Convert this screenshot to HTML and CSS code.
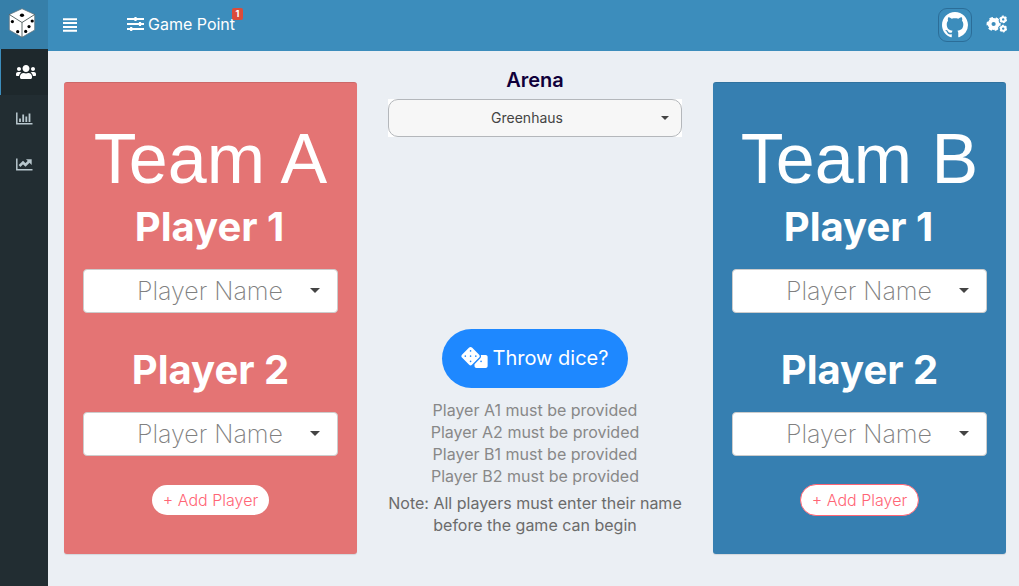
FILE: index.html
```html
<!DOCTYPE html>
<html lang="en">
<head>
<meta charset="utf-8">
<title>Game Point</title>
<link rel="stylesheet" href="styles.css">
</head>
<body>
<div class="app">
  <aside class="sidebar">
    <div class="logo">
      <svg width="28" height="30" viewBox="0 0 28 30"><path d="M14 .7 26.7 6.5V22L14 29.3 1.3 22V6.5Z" fill="#fff" stroke="#667883" stroke-width=".8"/><path d="M1.3 6.5 14 14.5 26.7 6.5M14 14.5v14.8" fill="none" stroke="#344" stroke-width=".8"/><g><ellipse cx="14" cy="7.3" rx="2.1" ry="1.7"/><circle cx="4.4" cy="13.6" r="1.6"/><circle cx="9.7" cy="23.7" r="1.6"/><circle cx="24.2" cy="13" r="1.6"/><circle cx="21" cy="18.6" r="1.6"/><circle cx="17.7" cy="23.4" r="1.6"/></g></svg>
    </div>
    <nav>
      <a class="item active"><svg width="20" height="16" viewBox="0 0 640 512" fill="currentColor"><path d="M96 224c35.300 0 64-28.700 64-64s-28.700-64-64-64-64 28.700-64 64 28.700 64 64 64zm448 0c35.300 0 64-28.700 64-64s-28.700-64-64-64-64 28.700-64 64 28.700 64 64 64zm32 32h-64c-17.600 0-33.500 7.100-45.100 18.600 40.300 22.100 68.900 62 75.100 109.400h66c17.700 0 32-14.300 32-32v-32c0-35.300-28.700-64-64-64zm-256 0c61.900 0 112-50.100 112-112S381.900 32 320 32 208 82.100 208 144s50.100 112 112 112zm76.800 32h-8.300c-20.800 10-43.900 16-68.500 16s-47.600-6-68.500-16h-8.300C179.600 288 128 339.600 128 403.200V432c0 26.500 21.500 48 48 48h288c26.500 0 48-21.500 48-48v-28.800c0-63.600-51.600-115.200-115.200-115.200zm-223.700-13.400C161.500 263.100 145.600 256 128 256H64c-35.300 0-64 28.700-64 64v32c0 17.700 14.300 32 32 32h65.900c6.300-47.400 34.900-87.300 75.200-109.400z"/></svg></a>
      <a class="item"><svg width="17" height="13" viewBox="0 0 17 13" fill="none" stroke="currentColor"><path d="M.8 .5v11.200H16.500" stroke-width="1.500"/><path d="M4 10V6.500M7.200 10V2.500M10.300 10V4.500M13.500 10V1.500" stroke-width="1.800"/></svg></a>
      <a class="item"><svg width="17" height="13" viewBox="0 0 17 13" fill="none" stroke="currentColor"><path d="M.8 .5v11.200H16.500" stroke-width="1.500"/><path d="M3.500 8 7 4.500 9.500 7 13.500 3" stroke-width="2.500"/><path d="M10 1.200h5.700v5.700Z" fill="currentColor" stroke="none"/></svg></a>
    </nav>
  </aside>
  <div class="main">
    <header class="topbar">
      <svg class="burger" width="14" height="14" viewBox="0 0 14 14" fill="#fff"><path d="M0 .2h14v2H0zM0 4.100h14v2H0zM0 8h14v2H0zM0 11.800h14v2H0z"/></svg>
      <a class="gamepoint"><svg width="17" height="14" viewBox="0 0 17 14" fill="none" stroke="#fff"><path d="M0 2h17M0 7h17M0 12h17" stroke-width="1.800"/><path d="M8.500 0v4M13 5v4M4.200 10v4" stroke-width="2.200"/></svg><span>Game Point</span><b class="badge">1</b></a>
      <span class="github"><svg width="26" height="26" viewBox="0 0 16 16" fill="#fff"><path d="M8 0C3.580 0 0 3.580 0 8c0 3.540 2.290 6.530 5.470 7.590.4.070.55-.17.55-.38 0-.19-.01-.82-.01-1.490-2.010.37-2.530-.49-2.690-.94-.09-.23-.48-.94-.82-1.130-.28-.15-.68-.52-.01-.53.63-.01 1.080.58 1.230.82.72 1.210 1.870.87 2.330.66.070-.52.28-.87.51-1.070-1.780-.2-3.640-.89-3.640-3.950 0-.87.31-1.590.82-2.150-.08-.2-.36-1.020.080-2.120 0 0 .67-.21 2.200.82.64-.18 1.320-.27 2-.27.68 0 1.360.09 2 .27 1.530-1.040 2.200-.82 2.200-.82.44 1.100.16 1.920.080 2.120.51.56.82 1.270.82 2.150 0 3.070-1.870 3.750-3.650 3.950.29.25.54.73.54 1.480 0 1.070-.01 1.930-.01 2.200 0 .21.15.46.55.38A8.013 8.013 0 0016 8c0-4.420-3.580-8-8-8z"/></svg></span>
      <svg class="cogs" width="22" height="18" viewBox="0 0 22 18" fill="none" stroke="#fff"><g><circle cx="7.600" cy="9" r="4" stroke-width="3.800"/><circle cx="7.600" cy="9" r="6.100" stroke-width="1.900" stroke-dasharray="3.600 2.788" stroke-dashoffset="1.800"/><circle cx="17.200" cy="4.400" r="2.200" stroke-width="2"/><circle cx="17.200" cy="4.400" r="3.300" stroke-width="1.200" stroke-dasharray="1.900 1.556"/><circle cx="17.200" cy="13.600" r="2.200" stroke-width="2"/><circle cx="17.200" cy="13.600" r="3.300" stroke-width="1.200" stroke-dasharray="1.900 1.556"/></g></svg>
    </header>
    <main class="content">
      <section class="card team-a">
        <h1>Team A</h1>
        <h2>Player 1</h2>
        <div class="select"><span>Player Name</span><i class="caret"></i></div>
        <h2>Player 2</h2>
        <div class="select"><span>Player Name</span><i class="caret"></i></div>
        <button class="add">+ Add Player</button>
      </section>
      <section class="center">
        <h3>Arena</h3>
        <div class="arena-wrap"><div class="arena"><span>Greenhaus</span><i class="caret"></i></div></div>
        <button class="throw"><svg width="27" height="21" viewBox="0 0 640 512"><path fill="#fff" d="M592 192H473.260c12.690 29.590 7.120 65.200-17 89.320L320 417.580V464c0 26.510 21.490 48 48 48h224c26.510 0 48-21.490 48-48V240c0-26.510-21.490-48-48-48zM433.630 189.300 258.700 14.370c-19.160-19.160-50.230-19.160-69.390 0L14.370 189.300c-19.160 19.160-19.160 50.230 0 69.390L189.300 433.630c19.160 19.160 50.230 19.160 69.390 0L433.630 258.700c19.160-19.170 19.160-50.240 0-69.400z"/><g fill="#1e88ff"><circle cx="96" cy="224" r="20"/><circle cx="224" cy="96" r="20"/><circle cx="224" cy="224" r="20"/><circle cx="224" cy="352" r="20"/><circle cx="352" cy="224" r="20"/><circle cx="480" cy="352" r="20"/></g></svg><span>Throw dice?</span></button>
        <ul class="errors">
          <li>Player A1 must be provided</li>
          <li>Player A2 must be provided</li>
          <li>Player B1 must be provided</li>
          <li>Player B2 must be provided</li>
        </ul>
        <p class="note">Note: All players must enter their name<br>before the game can begin</p>
      </section>
      <section class="card team-b">
        <h1>Team B</h1>
        <h2>Player 1</h2>
        <div class="select"><span>Player Name</span><i class="caret"></i></div>
        <h2>Player 2</h2>
        <div class="select"><span>Player Name</span><i class="caret"></i></div>
        <button class="add outlined">+ Add Player</button>
      </section>
    </main>
  </div>
</div>
</body>
</html>
```
FILE: styles.css
```css
* { box-sizing: border-box; }
body { margin: 0; font-family: Inter, sans-serif; background: #ebeff4; overflow: hidden; }
h1, h2, h3, p, ul { margin: 0; padding: 0; }
svg { display: block; flex: none; }
button { font-family: inherit; border: 0; padding: 0; }

.app { display: flex; height: 586px; }

.sidebar { width: 48px; flex: none; background: #222d32; }
.logo { height: 49px; background: #367fa9; padding: 8px 0 0 8px; }
.item { display: flex; align-items: center; height: 46px; padding: 0 0 0 16px; color: #b8c7ce; }
.item.active { background: #1e282c; border-left: 1px solid #3c8dbc; padding: 0 0 1px 15px; color: #fff; }

.main { flex: 1; min-width: 0; }
.topbar { display: flex; align-items: center; height: 51px; background: #3c8dbc; padding: 0 11px 0 15px; }
.burger { margin: 0 50px 2px 0; }
.gamepoint { position: relative; display: flex; align-items: center; gap: 4px; height: 51px; color: #fff; font-size: 16px; line-height: 20px; padding-bottom: 3px; }
.badge { position: absolute; left: 105px; top: 8px; width: 11px; height: 12px; border-radius: 2px; background: #dd4b39; font-size: 9px; line-height: 12px; text-align: center; }
.github { display: flex; align-items: center; justify-content: center; width: 34px; height: 34px; margin: 0 14px 1px auto; border: 1px solid #2b6d98; border-radius: 9px; }
.cogs { margin-bottom: 3px; }

.content { display: grid; grid-template-columns: 293px 294px 293px; column-gap: 31px; padding: 31px 0 0 16px; }
.card { height: 472px; border-radius: 3px; box-shadow: 0 1px 1px rgba(0, 0, 0, .1); border-top: 1px solid rgba(0, 0, 0, .1); padding: 38px 19px 0; color: #fff; text-align: center; }
.team-a { background: #e47474; }
.team-b { background: #367fb1; }
.card h1 { font: 400 70px/77px "Liberation Sans", sans-serif; white-space: nowrap; }
.card h2 { font-size: 40px; font-weight: 700; line-height: 44px; margin: 7px 0 20px; }
.card h1 + h2 { padding-right: 2px; }
.card .select + h2 { margin-top: 35px; }
.select { position: relative; height: 44px; border: 1px solid #ccc; border-radius: 4px; background: #fff; color: #808080; font-size: 25px; font-weight: 250; line-height: 42px; padding-right: 1px; }
.caret { position: absolute; right: 17px; top: 18px; border: 5px solid transparent; border-top-color: #444; border-bottom: 0; }
.add { width: 117px; height: 30px; margin-top: 29px; border-radius: 15px; background: #fff; color: #ff6575; font-size: 16px; line-height: 30px; font-weight: 350; white-space: nowrap; }
.outlined { width: 119px; height: 32px; margin-top: 28px; border: 1px solid #ff6575; border-radius: 16px; }

.center { display: flex; flex-direction: column; align-items: center; margin-top: -15px; }
.center h3 { font-size: 20px; font-weight: 600; line-height: 26px; color: #10003a; }
.arena-wrap { width: 294px; margin-top: 6px; background: #fff; }
.arena { position: relative; height: 38px; border: 1px solid #b4b7bb; border-radius: 10px; background: #f7f7f7; color: #444; font-size: 14px; line-height: 36px; text-align: center; padding-right: 16px; }
.arena .caret { right: 12px; top: 16px; border-width: 4px; border-bottom: 0; }
.throw { display: flex; align-items: center; justify-content: center; gap: 5px; width: 186px; height: 59px; margin-top: 192px; padding: 0 1px 2px 0; border-radius: 30px; background: #1e88ff; color: #fff; font-size: 20px; }
.errors { list-style: none; margin-top: 11px; text-align: center; font-size: 16px; line-height: 22px; color: #888; }
.note { margin-top: 5px; text-align: center; font-size: 16px; line-height: 22px; color: #6b6b6b; white-space: nowrap; }
```
